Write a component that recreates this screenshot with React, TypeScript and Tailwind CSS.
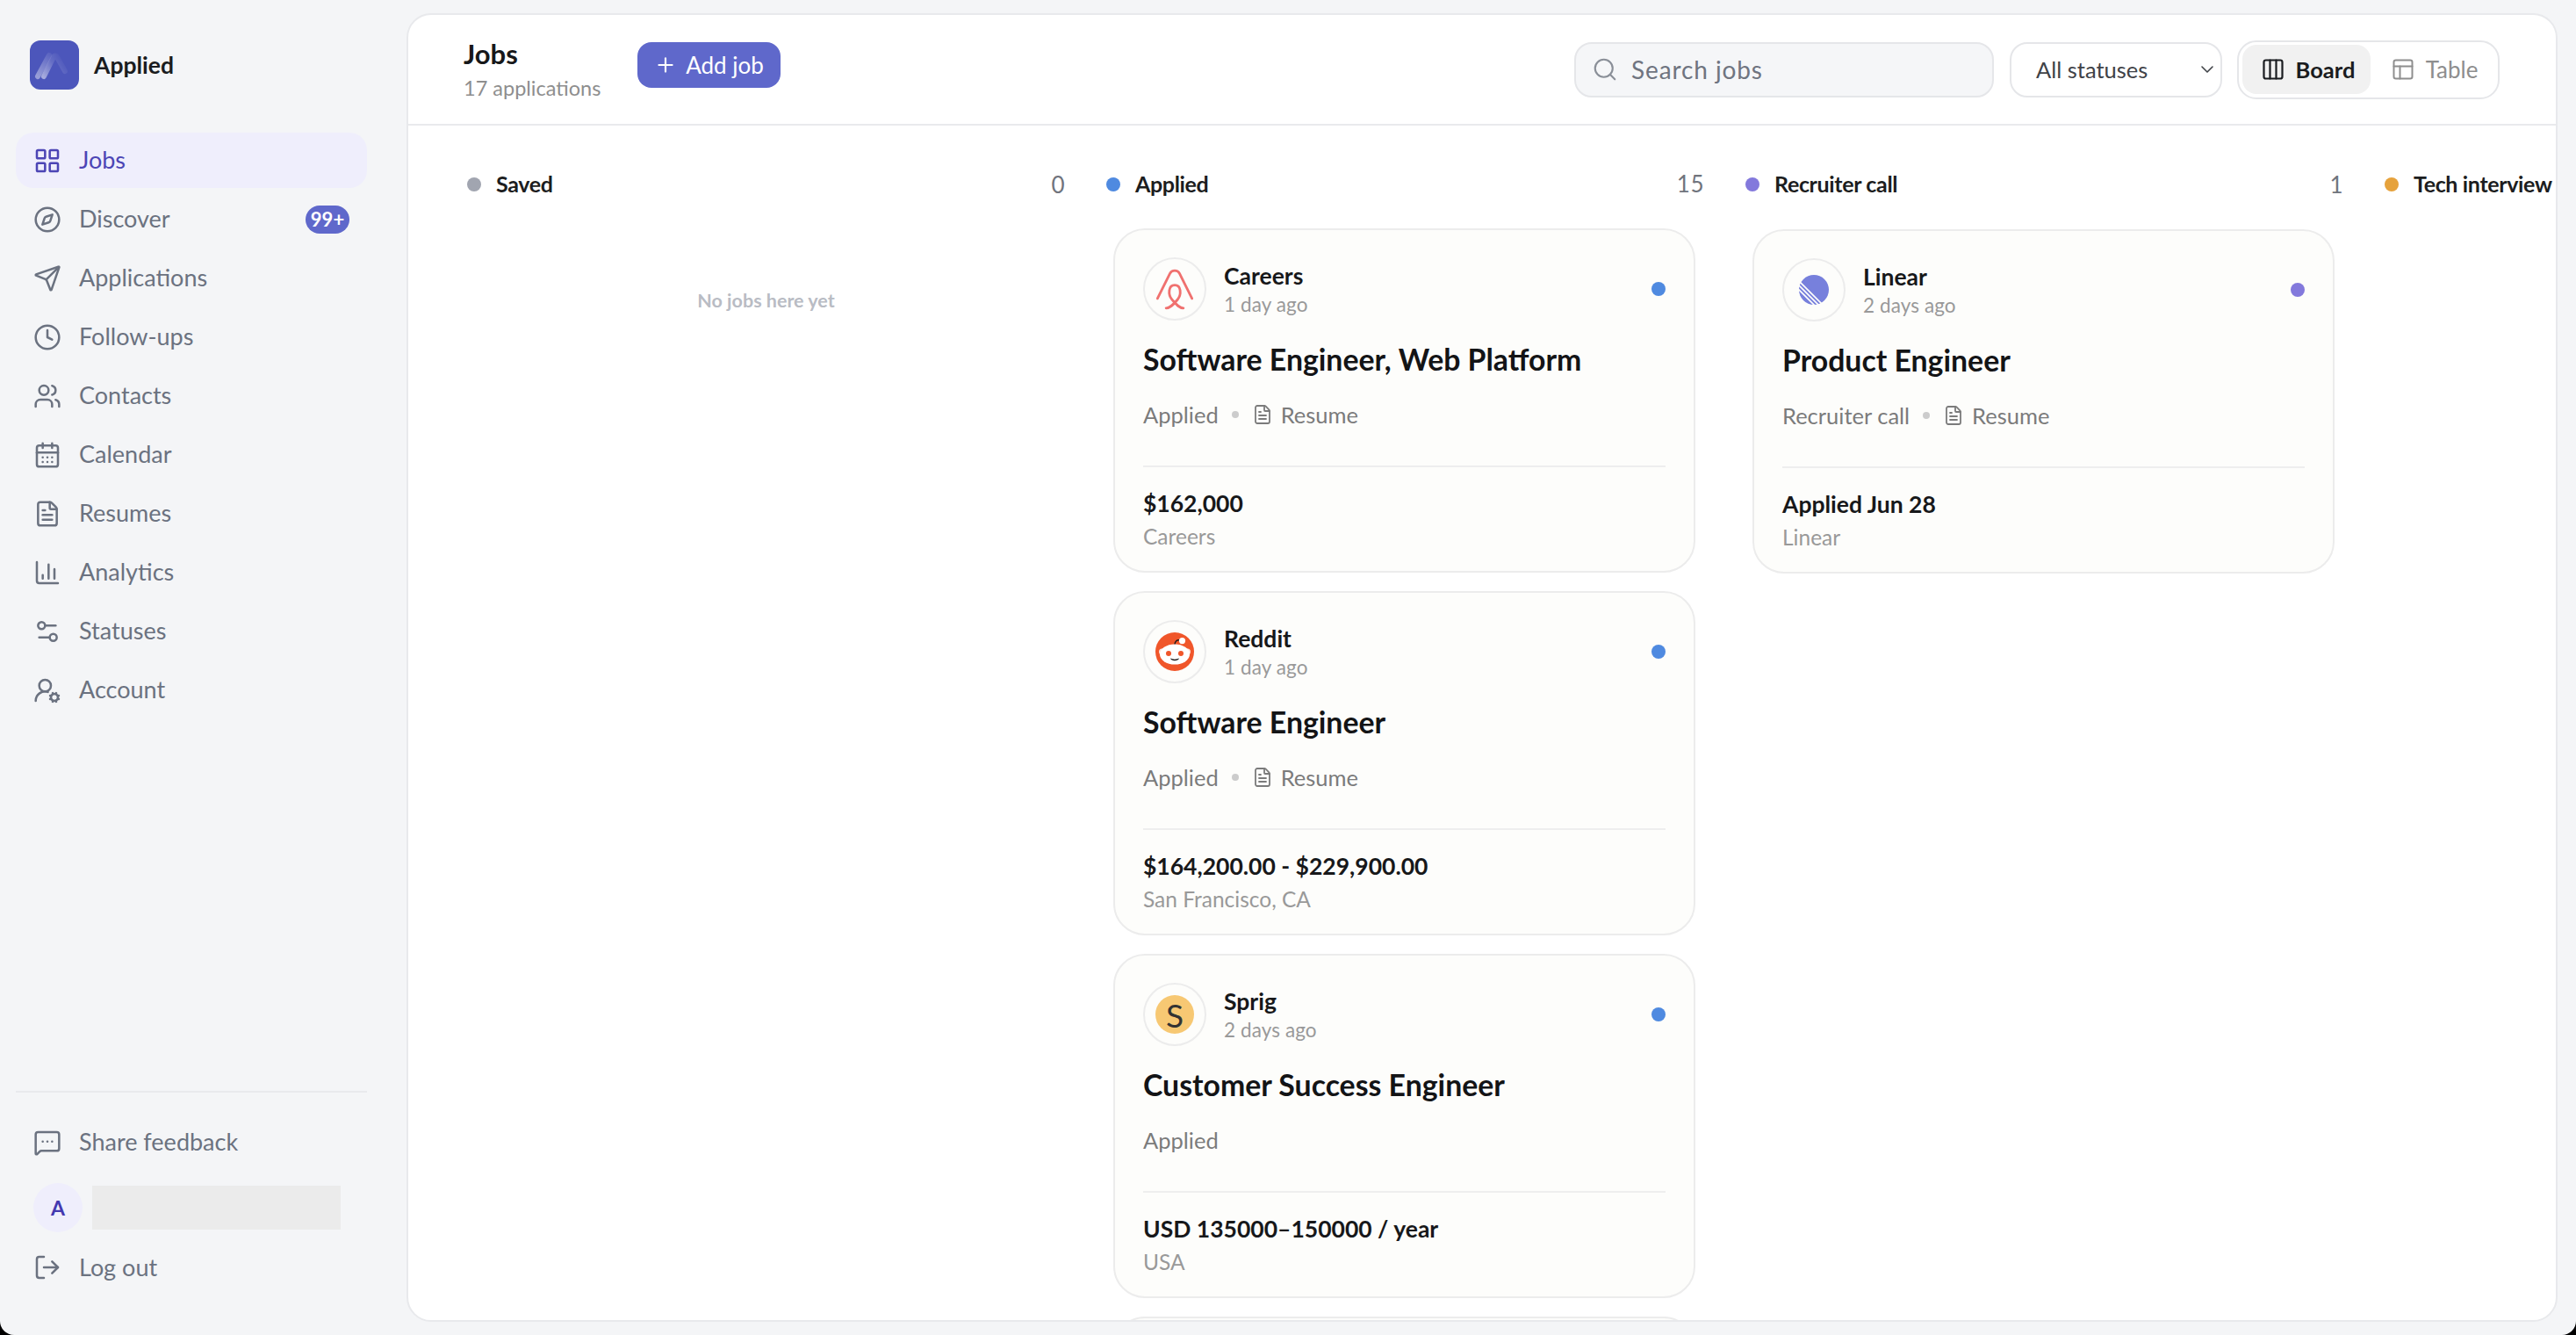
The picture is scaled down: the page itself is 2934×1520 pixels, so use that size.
import React from "react";
import {
  LayoutGrid,
  Compass,
  Send,
  Clock,
  Users,
  CalendarDays,
  FileText,
  ChartColumn,
  Settings2,
  UserRoundCog,
  MessageSquareMore,
  LogOut,
  Search,
  ChevronDown,
  Plus,
  Columns3,
  PanelsTopLeft,
} from "lucide-react";

const navItems = [
  { label: "Jobs", icon: LayoutGrid, active: true },
  { label: "Discover", icon: Compass, badge: "99+" },
  { label: "Applications", icon: Send },
  { label: "Follow-ups", icon: Clock },
  { label: "Contacts", icon: Users },
  { label: "Calendar", icon: CalendarDays },
  { label: "Resumes", icon: FileText },
  { label: "Analytics", icon: ChartColumn },
  { label: "Statuses", icon: Settings2 },
  { label: "Account", icon: UserRoundCog },
];

const AppLogo = () => (
  <div className="flex h-[56px] w-[56px] items-center justify-center rounded-[12px] bg-[#4c56bb]">
    <svg width="56" height="56" viewBox="0 0 56 56" fill="none">
      <defs>
        <linearGradient id="logoA" x1="9" y1="41" x2="26" y2="14" gradientUnits="userSpaceOnUse">
          <stop stopColor="#ffffff" stopOpacity="0.42" />
          <stop offset="1" stopColor="#ffffff" stopOpacity="0.05" />
        </linearGradient>
        <linearGradient id="logoB" x1="16" y1="42" x2="42" y2="24" gradientUnits="userSpaceOnUse">
          <stop stopColor="#ffffff" stopOpacity="0.5" />
          <stop offset="0.55" stopColor="#ffffff" stopOpacity="0.14" />
          <stop offset="1" stopColor="#ffffff" stopOpacity="0" />
        </linearGradient>
      </defs>
      <path d="M9 41L22 17" stroke="url(#logoA)" strokeWidth="6" strokeLinecap="round" />
      <path d="M16 41L27 19C28 17 30 17 31 19L40 35" stroke="url(#logoB)" strokeWidth="6" strokeLinecap="round" strokeLinejoin="round" />
    </svg>
  </div>
);

const AirbnbLogo = () => (
  <svg width="44" height="47" viewBox="0 0 40 43" fill="none" stroke="#f0716f" strokeWidth="2.6" strokeLinecap="round">
    <path d="M2 31L15 5C17 1 23 1 25 5L38 31" />
    <path d="M11 41C15 41 18 38 23 32C27 27 27 17 20 17C13 17 13 27 17 32C22 38 25 41 29 41" />
  </svg>
);

const RedditLogo = () => (
  <svg width="44" height="44" viewBox="0 0 44 44" fill="none">
    <circle cx="22" cy="22" r="22" fill="#f0562a" />
    <path d="M22 14C22 11 24 8 28 9" stroke="#1c1c1c" strokeWidth="1.4" />
    <circle cx="30.5" cy="9.6" r="3.6" fill="#fff" />
    <circle cx="7.5" cy="22" r="3.5" fill="#fde4dc" />
    <circle cx="36.5" cy="22" r="3.5" fill="#fde4dc" />
    <ellipse cx="22" cy="25" rx="17" ry="11.5" fill="#fff" />
    <circle cx="15" cy="24" r="3" fill="#f0562a" />
    <circle cx="29" cy="24" r="3" fill="#f0562a" />
    <path d="M17 29.5C20 31 24 31 27 29.5C26 33 18 33 17 29.5Z" fill="#1c1c1c" />
  </svg>
);

const LinearLogo = () => (
  <svg width="34" height="34" viewBox="0 0 34 34" fill="none">
    <circle cx="17" cy="17" r="17" fill="#7780dc" />
    <path d="M-2 5L29 36M-2 10L24 36M-2 15L19 36" stroke="#fdfdfb" strokeWidth="1.7" />
  </svg>
);

const SprigLogo = () => (
  <div className="flex h-[44px] w-[44px] items-center justify-center rounded-full bg-[#f7c873] text-[37px] leading-none text-[#333333]">
    S
  </div>
);

type Job = {
  company: string;
  ago: string;
  title: string;
  status: string;
  resume?: boolean;
  salary: string;
  place: string;
  dot: string;
  logo: React.ReactNode;
};

const appliedJobs: Job[] = [
  {
    company: "Careers",
    ago: "1 day ago",
    title: "Software Engineer, Web Platform",
    status: "Applied",
    resume: true,
    salary: "$162,000",
    place: "Careers",
    dot: "bg-[#4f8ae0]",
    logo: <AirbnbLogo />,
  },
  {
    company: "Reddit",
    ago: "1 day ago",
    title: "Software Engineer",
    status: "Applied",
    resume: true,
    salary: "$164,200.00 - $229,900.00",
    place: "San Francisco, CA",
    dot: "bg-[#4f8ae0]",
    logo: <RedditLogo />,
  },
  {
    company: "Sprig",
    ago: "2 days ago",
    title: "Customer Success Engineer",
    status: "Applied",
    salary: "USD 135000–150000 / year",
    place: "USA",
    dot: "bg-[#4f8ae0]",
    logo: <SprigLogo />,
  },
];

const recruiterJobs: Job[] = [
  {
    company: "Linear",
    ago: "2 days ago",
    title: "Product Engineer",
    status: "Recruiter call",
    resume: true,
    salary: "Applied Jun 28",
    place: "Linear",
    dot: "bg-[#8379dc]",
    logo: <LinearLogo />,
  },
];

const JobCard = ({ job }: { job: Job }) => (
  <div className="mr-[10px] ml-[8px] h-[392px] flex-none rounded-[36px] border-2 border-[#ececec] bg-[#fdfdfb] px-[32px] pt-[31px]">
    <div className="flex h-[72px] items-center">
      <div className="flex h-[72px] w-[72px] items-center justify-center rounded-full border-2 border-[#ececec] bg-[#fdfdfb]">
        {job.logo}
      </div>
      <div className="ml-[20px] flex-1">
        <div className="text-[26.5px] leading-[36px] font-bold text-[#17181a]">{job.company}</div>
        <div className="text-[22.5px] leading-[30px] tracking-[0.1px] text-[#999999]">{job.ago}</div>
      </div>
      <div className={`h-[16px] w-[16px] rounded-full ${job.dot}`} />
    </div>
    <div className="mt-[22px] text-[33.8px] leading-[44px] font-bold text-[#131416]">{job.title}</div>
    <div className="mt-[23px] flex h-[36px] items-center text-[25.5px] text-[#7b7b7b]">
      <span>{job.status}</span>
      <span className={job.resume ? "contents" : "hidden"}>
        <span className="mx-[15px] h-[8px] w-[8px] rounded-full bg-[#cccccc]" />
        <FileText size={24} strokeWidth={1.8} className="mr-[9px]" />
        <span>Resume</span>
      </span>
    </div>
    <div className="mt-[40px] h-[2px] bg-[#eeeeee]" />
    <div className="mt-[23px] text-[26.5px] leading-[36px] font-bold text-[#17181a]">{job.salary}</div>
    <div className="mt-[4px] text-[24.5px] leading-[32px] text-[#999999]">{job.place}</div>
  </div>
);

const ColumnHead = ({ label, count, dot }: { label: string; count?: string; dot: string }) => (
  <div className="flex h-[40px] items-center">
    <span className={`h-[16px] w-[16px] flex-none rounded-full ${dot}`} />
    <span className="ml-[17px] flex-1 text-[25px] font-bold tracking-[-0.35px] whitespace-nowrap text-[#1c1d20]">{label}</span>
    {count && <span className="text-[26px] tracking-[0.5px] text-[#70747d]">{count}</span>}
  </div>
);

export default function App() {
  return (
    <div className="h-[1520px] w-[2934px] overflow-hidden bg-black font-['Lato',sans-serif]">
      <div className="flex h-full w-full overflow-hidden rounded-b-[16px] bg-[#f4f5f7]">
        <aside className="flex h-full w-[463px] flex-none flex-col px-[18px] pt-[46px] pb-[46px]">
          <div className="ml-[16px] flex h-[56px] items-center">
            <AppLogo />
            <span className="mt-[2px] ml-[17px] text-[26.5px] font-bold text-[#1a1c20]">Applied</span>
          </div>
          <nav className="mt-[49px] flex w-[400px] flex-col gap-[4px]">
            {navItems.map((item) => (
              <div
                key={item.label}
                className={
                  item.active
                    ? "flex h-[63px] items-center rounded-[20px] bg-[#efeefc] pr-[20px] pl-[20px] text-[#4c45b5]"
                    : "flex h-[63px] items-center rounded-[20px] pr-[20px] pl-[20px] text-[#6b7280]"
                }
              >
                <item.icon size={32} strokeWidth={1.9} />
                <span className="ml-[20px] flex-1 text-[27px]">{item.label}</span>
                {item.badge && (
                  <span className="flex h-[32px] w-[50px] items-center justify-center rounded-full bg-[#5f68cb] text-[22px] font-bold text-white">
                    {item.badge}
                  </span>
                )}
              </div>
            ))}
          </nav>
          <div className="mt-auto w-[400px]">
            <div className="h-[2px] bg-[#e9eaed]" />
            <div className="mt-[25px] flex h-[63px] items-center px-[20px] text-[#6b7280]">
              <MessageSquareMore size={32} strokeWidth={1.9} />
              <span className="ml-[20px] text-[27px]">Share feedback</span>
            </div>
            <div className="mt-[15px] flex h-[56px] items-center pl-[20px]">
              <div className="flex h-[56px] w-[56px] items-center justify-center rounded-full bg-[#efeefc] text-[23px] font-bold text-[#4338b0]">
                A
              </div>
              <div className="ml-[11px] h-[50px] w-[283px] bg-[#ebebeb]" />
            </div>
            <div className="mt-[9px] flex h-[62px] items-center px-[20px] text-[#6b7280]">
              <LogOut size={32} strokeWidth={1.9} />
              <span className="ml-[20px] text-[27px]">Log out</span>
            </div>
          </div>
        </aside>

        <main className="my-[15px] mr-[21px] flex min-w-0 flex-1 flex-col overflow-hidden rounded-[28px] border-2 border-[#e8e9ec] bg-white">
          <header className="flex h-[126px] flex-none items-center justify-between border-b-2 border-[#e9eaed] pr-[64px] pl-[63px]">
            <div className="flex items-center">
              <div className="mb-[3px] w-[155px] whitespace-nowrap">
                <div className="text-[31px] leading-[42px] font-bold text-[#17181a]">Jobs</div>
                <div className="mt-[2px] text-[23.5px] leading-[32px] text-[#8e8e8e]">17 applications</div>
              </div>
              <button className="mb-[10px] ml-[43px] flex h-[52px] w-[163px] items-center justify-center rounded-[16px] bg-[#5f68cb] text-[26px] text-white">
                <Plus size={26} strokeWidth={2} className="mr-[10px]" />
                Add job
              </button>
            </div>
            <div className="flex items-center">
              <div className="flex h-[63px] w-[478px] items-center rounded-[20px] border-2 border-[#e5e6e9] bg-[#f5f6f8] pl-[18px] text-[#8a8f98]">
                <Search size={30} strokeWidth={1.7} />
                <span className="ml-[15px] text-[28px] tracking-[0.9px] text-[#6f7480]">Search jobs</span>
              </div>
              <div className="ml-[18px] flex h-[63px] w-[242px] items-center justify-between rounded-[20px] border-2 border-[#e5e6e9] bg-white pr-[3px] pl-[28px]">
                <span className="text-[25.5px] text-[#3f4247]">All statuses</span>
                <ChevronDown size={24} strokeWidth={1.6} className="text-[#3f4247]" />
              </div>
              <div className="ml-[17px] flex h-[67px] w-[299px] items-center rounded-[22px] border-2 border-[#e5e6e9] bg-white p-[4px]">
                <div className="flex h-[56px] w-[146px] items-center justify-center rounded-[16px] bg-[#f1f1f1] pl-[3px] text-[#1a1c20]">
                  <Columns3 size={28} strokeWidth={1.9} />
                  <span className="ml-[12px] text-[25.5px] font-bold">Board</span>
                </div>
                <div className="flex h-[56px] flex-1 items-center justify-center pl-[4px] text-[#8e8e8e]">
                  <PanelsTopLeft size={28} strokeWidth={1.7} />
                  <span className="ml-[12px] text-[26px]">Table</span>
                </div>
              </div>
            </div>
          </header>

          <section className="flex min-h-0 flex-1 gap-[47px] overflow-hidden pt-[47px] pl-[67px]">
            <div className="w-[681px] flex-none">
              <ColumnHead label="Saved" count="0" dot="bg-[#a1a5b0]" />
              <div className="mt-[96px] text-center text-[21.5px] font-bold text-[#b9bcc4]">No jobs here yet</div>
            </div>
            <div className="flex w-[681px] flex-none flex-col">
              <ColumnHead label="Applied" count="15" dot="bg-[#4f8ae0]" />
              <div className="mt-[31px] flex flex-col gap-[21px]">
                {appliedJobs.map((job) => (
                  <JobCard key={job.company} job={job} />
                ))}
                <div className="mr-[10px] ml-[8px] h-[392px] flex-none rounded-[36px] border-2 border-[#ececec] bg-[#fdfdfb]" />
              </div>
            </div>
            <div className="flex w-[681px] flex-none flex-col">
              <ColumnHead label="Recruiter call" count="1" dot="bg-[#8379dc]" />
              <div className="mt-[31px] flex flex-col gap-[21px]">
                {recruiterJobs.map((job) => (
                  <JobCard key={job.company} job={job} />
                ))}
              </div>
            </div>
            <div className="w-[681px] flex-none">
              <ColumnHead label="Tech interview" dot="bg-[#e6a23c]" />
            </div>
          </section>
        </main>
      </div>
    </div>
  );
}
